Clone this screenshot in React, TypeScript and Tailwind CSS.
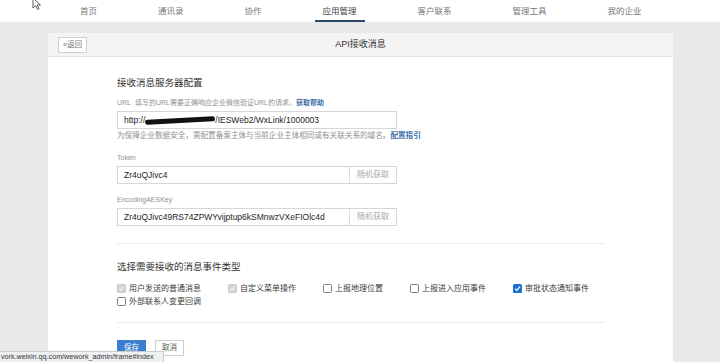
import React from "react";

const navItems = ["首页", "通讯录", "协作", "应用管理", "客户联系", "管理工具", "我的企业"];

const events = [
  { label: "用户发送的普通消息", state: "locked" },
  { label: "自定义菜单操作", state: "locked" },
  { label: "上报地理位置", state: "off" },
  { label: "上报进入应用事件", state: "off" },
  { label: "审批状态通知事件", state: "on" },
  { label: "外部联系人变更回调", state: "off" },
];

const Check = ({ state }: { state: string }) => {
  if (state === "off")
    return <span className="w-[9px] h-[9px] rounded-[1.5px] border border-[#7d7d7d] bg-white shrink-0" />;
  const on = state === "on";
  return (
    <span
      className={
        on
          ? "w-[9px] h-[9px] rounded-[1.5px] bg-[#1a6fd8] flex items-center justify-center shrink-0"
          : "w-[9px] h-[9px] rounded-[1.5px] bg-[#d4d4d4] border border-[#c8c8c8] flex items-center justify-center shrink-0"
      }
    >
      <svg width="7" height="7" viewBox="0 0 10 10" fill="none">
        <path d="M1.5 5.2 4 7.6 8.6 2.4" stroke={on ? "#fff" : "#eeeeee"} strokeWidth="1.8" />
      </svg>
    </span>
  );
};

const Field = ({ value, button }: { value: React.ReactNode; button?: boolean }) => (
  <div className="w-[280px] h-[18px] border border-[#d6d6d6] bg-white flex items-stretch">
    <div className="flex-1 flex items-center pl-[6px] text-[8.5px] text-[#1e1e1e] whitespace-nowrap overflow-hidden">
      {value}
    </div>
    {button && (
      <div className="w-[47px] border-l border-[#dcdcdc] flex items-center justify-center text-[8px] text-[#a9a9a9]">
        随机获取
      </div>
    )}
  </div>
);

export default function App() {
  return (
    <div
      className="w-[720px] h-[362px] overflow-hidden relative bg-[#e8e9eb]"
      style={{ fontFamily: '"Liberation Sans", Arial, "Noto Sans CJK SC", sans-serif' }}
    >
      <div className="h-[22px] bg-white flex items-stretch pl-[72px] gap-[45px]">
        {navItems.map((n) => (
          <div
            key={n}
            className={
              n === "应用管理"
                ? "px-2 flex items-center text-[8.5px] text-[#444] border-b-2 border-[#2c4668] pt-[2px]"
                : "px-2 flex items-center text-[8.5px] text-[#777]"
            }
          >
            {n}
          </div>
        ))}
      </div>

      <div className="ml-[48px] w-[625px] mt-[11px]">
        <div className="h-[24px] bg-[#f4f4f4] border-b border-[#e4e4e4] grid grid-cols-[1fr_auto_1fr] items-center">
          <div className="pl-[10px]">
            <div className="w-[29px] h-[16px] border border-[#cfcfcf] bg-white text-[7.5px] text-[#777] flex items-center justify-center">
              «返回
            </div>
          </div>
          <div className="text-[9px] text-[#333]">API接收消息</div>
          <div />
        </div>

        <div className="bg-white h-[320px] pl-[69px] pr-[68px]">
          <div className="pt-[19px] h-[33px] leading-[14px] text-[9.5px] text-[#333]">接收消息服务器配置</div>

          <div className="mt-[8px] h-[10px] leading-[10px] text-[7px] text-[#929292]">
            URL&nbsp;&nbsp;填写的URL需要正确响应企业微信验证URL的请求。
            <span className="text-[#3b6ea5] font-bold">获取帮助</span>
          </div>
          <div className="mt-[3px]">
            <Field
              value={
                <>
                  http://
                  <span className="inline-block w-[70px] h-[5px] bg-[#111] rounded-full -rotate-[3deg] mt-[1px]" />
                  /IESWeb2/WxLink/1000003
                </>
              }
            />
          </div>
          <div className="mt-[2px] h-[10px] leading-[10px] text-[7.6px] text-[#929292] whitespace-nowrap">
            为保障企业数据安全，需配置备案主体与当前企业主体相同或有关联关系的域名。
            <span className="text-[#3b6ea5] font-bold">配置指引</span>
          </div>

          <div className="mt-[12px] h-[10px] leading-[10px] text-[7px] text-[#929292]">Token</div>
          <div className="mt-[3px]">
            <Field value="Zr4uQJivc4" button />
          </div>

          <div className="mt-[11px] h-[10px] leading-[10px] text-[7px] text-[#929292]">EncodingAESKey</div>
          <div className="mt-[3px]">
            <Field value="Zr4uQJivc49RS74ZPWYvijptup6kSMnwzVXeFIOlc4d" button />
          </div>

          <div className="mt-[17px] h-px bg-[#ececec]" />

          <div className="mt-[16px] h-[14px] leading-[14px] text-[9.5px] text-[#333]">选择需要接收的消息事件类型</div>

          <div className="mt-[8px] flex flex-wrap w-[520px]">
            {events.map((e) => (
              <div key={e.label} className="h-[13px] flex items-center gap-[3px] mr-[27px]">
                <Check state={e.state} />
                <span className="text-[8px] text-[#3c3c3c] whitespace-nowrap">{e.label}</span>
              </div>
            ))}
          </div>

          <div className="mt-[14px] h-px bg-[#ececec]" />

          <div className="mt-[17px] flex gap-[9px]">
            <div className="w-[29px] h-[16px] bg-[#3c7fd0] text-white text-[7.5px] flex items-center justify-center">
              保存
            </div>
            <div className="w-[29px] h-[16px] border border-[#cfcfcf] bg-white text-[#555] text-[7.5px] flex items-center justify-center">
              取消
            </div>
          </div>
        </div>
      </div>

      <div className="absolute left-0 bottom-0 h-[11px] w-[164px] bg-[#eef0f2] border-t border-r border-[#c9c9c9] overflow-hidden">
        <div className="pl-[1px] text-[7.2px] leading-[10px] text-[#333] whitespace-nowrap">
          vork.weixin.qq.com/wework_admin/frame#index
        </div>
      </div>

      <svg className="absolute left-[32px] top-[-3px]" width="10" height="14" viewBox="0 0 10 14">
        <path d="M1 1 L1 11 L3.5 8.6 L5.5 12.5 L7 11.8 L5.2 8 L8.5 8 Z" fill="#fff" stroke="#333" strokeWidth="0.8" />
      </svg>
    </div>
  );
}
